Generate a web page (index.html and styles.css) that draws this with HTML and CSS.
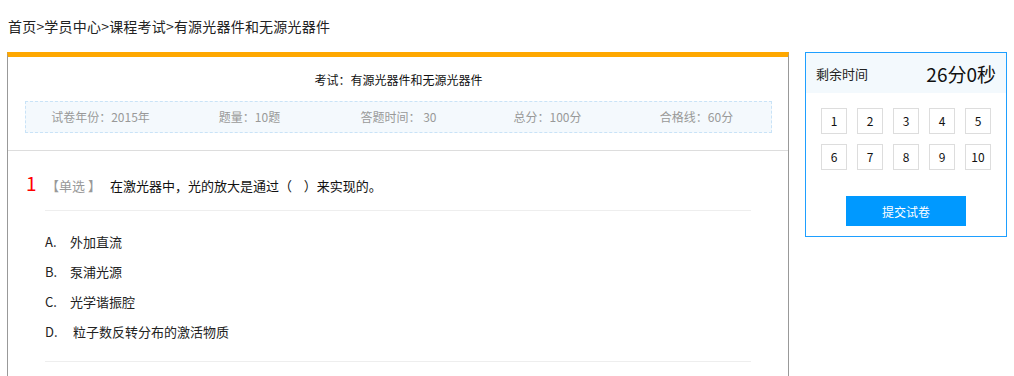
FILE: index.html
```html
<!DOCTYPE html>
<html lang="zh-CN">
<head>
    <meta charset="UTF-8">
    <meta name="viewport" content="width=device-width, initial-scale=1.0">
    <title>课程考试</title>
    <link rel="stylesheet" href="styles.css">
</head>
<body>
    <div class="crumb">首页&gt;学员中心&gt;课程考试&gt;有源光器件和无源光器件</div>

    <div class="wrap">
        <div class="paper">
            <div class="paper-head">
                <h2 class="paper-title">考试：有源光器件和无源光器件</h2>
                <div class="paper-info">
                    <span>试卷年份：2015年</span>
                    <span>题量：10题</span>
                    <span>答题时间： 30</span>
                    <span>总分：100分</span>
                    <span>合格线：60分</span>
                </div>
            </div>

            <div class="question">
                <div class="q-title">
                    <span class="q-num">1</span>
                    <span class="q-type">【单选 】</span>
                    <span class="q-text">在激光器中，光的放大是通过（&nbsp;&nbsp;&nbsp;&nbsp;）来实现的。</span>
                </div>
                <ul class="options">
                    <li><span class="opt-key">A.</span>外加直流</li>
                    <li><span class="opt-key">B.</span>泵浦光源</li>
                    <li><span class="opt-key">C.</span>光学谐振腔</li>
                    <li><span class="opt-key">D.</span>&nbsp;粒子数反转分布的激活物质</li>
                </ul>
            </div>
        </div>

        <div class="side">
            <div class="timer">
                <span class="timer-label">剩余时间</span>
                <span class="timer-value">26分0秒</span>
            </div>
            <div class="nums">
                <a class="num">1</a>
                <a class="num">2</a>
                <a class="num">3</a>
                <a class="num">4</a>
                <a class="num">5</a>
                <a class="num">6</a>
                <a class="num">7</a>
                <a class="num">8</a>
                <a class="num">9</a>
                <a class="num">10</a>
            </div>
            <div class="submit-row">
                <button class="submit-btn">提交试卷</button>
            </div>
        </div>
    </div>
</body>
</html>
```

FILE: styles.css
```css
body {
    margin: 0;
    padding: 0;
    font-family: "Noto Sans CJK SC", "Liberation Sans", sans-serif;
    color: #333;
    background-color: #fff;
}

.crumb {
    padding: 16px 8px 0 8px;
    height: 20px;
    line-height: 20px;
    font-size: 14px;
    color: #222;
    letter-spacing: 0.2px;
}

.wrap {
    display: flex;
    align-items: flex-start;
    gap: 16px;
    padding: 16px 0 0 7px;
}

/* 左侧试卷 */
.paper {
    width: 780px;
    border-top: 5px solid #ffa800;
    border-left: 1px solid #999;
    border-right: 1px solid #999;
    min-height: 400px;
}

.paper-head {
    padding: 13px 16px 17px 17px;
    border-bottom: 1px solid #ddd;
}

.paper-title {
    margin: 0;
    font-size: 12px;
    font-weight: normal;
    line-height: 20px;
    text-align: center;
    color: #111;
}

.paper-info {
    display: grid;
    grid-template-columns: repeat(5, 1fr);
    margin-top: 11px;
    height: 30px;
    line-height: 30px;
    border: 1px dashed #c9e3f7;
    background-color: #f4f9fd;
    font-size: 12px;
    color: #999;
    text-align: center;
}

.question {
    padding: 17px 37px 0 18px;
}

.q-title {
    display: flex;
    align-items: baseline;
    height: 30px;
    line-height: 30px;
}

.q-num {
    font-size: 19px;
    color: #f00;
    width: 20px;
}

.q-type {
    font-size: 13px;
    color: #999;
    width: 64px;
}

.q-text {
    font-size: 13px;
    color: #111;
}

.options {
    list-style: none;
    margin: 12px 0 0 19px;
    padding: 16px 0 14px 0;
    border-top: 1px solid #eee;
    border-bottom: 1px solid #eee;
}

.options li {
    height: 30px;
    line-height: 30px;
    font-size: 13px;
    color: #222;
}

.opt-key {
    display: inline-block;
    width: 25px;
}

/* 右侧答题卡 */
.side {
    width: 200px;
    border: 1px solid #1e9fff;
}

.timer {
    display: flex;
    justify-content: space-between;
    align-items: center;
    height: 40px;
    padding: 0 10px;
    background-color: #f3f9fd;
}

.timer-label {
    font-size: 13px;
    color: #222;
}

.timer-value {
    font-size: 19px;
    color: #111;
}

.nums {
    display: grid;
    grid-template-columns: repeat(5, 26px);
    gap: 10px;
    padding: 15px 15px 0 15px;
}

.num {
    box-sizing: border-box;
    width: 26px;
    height: 26px;
    line-height: 24px;
    border: 1px solid #ddd;
    text-align: center;
    font-size: 12px;
    color: #111;
}

.submit-row {
    text-align: center;
    padding: 26px 0 10px 0;
}

.submit-btn {
    width: 120px;
    height: 30px;
    border: none;
    background-color: #0099ff;
    color: #fff;
    font-family: inherit;
    font-size: 12px;
    cursor: pointer;
}
```
